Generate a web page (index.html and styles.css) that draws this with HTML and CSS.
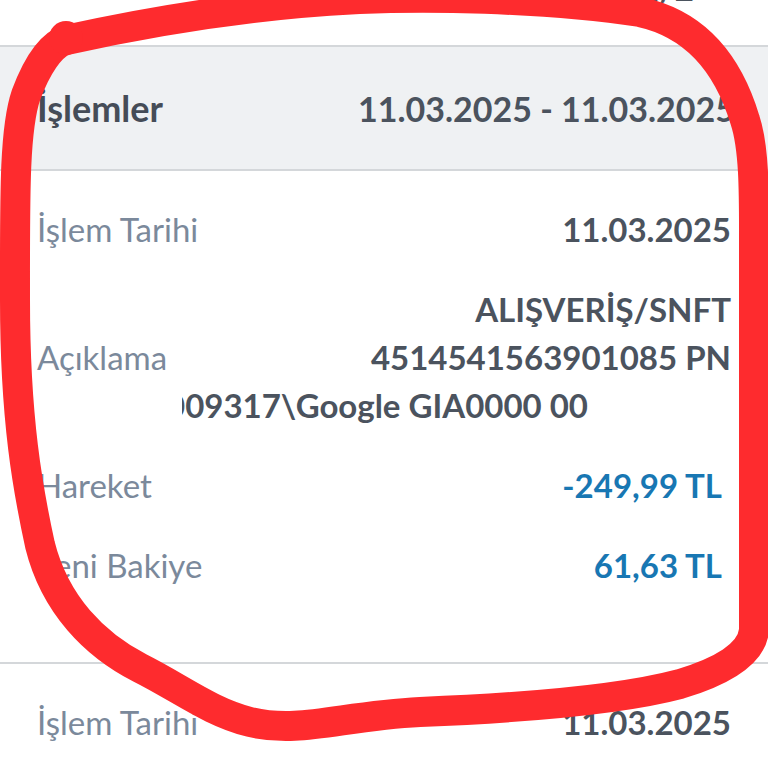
FILE: index.html
```html
<!DOCTYPE html>
<html lang="tr">
<head>
    <meta charset="UTF-8">
    <meta name="viewport" content="width=device-width, initial-scale=1.0">
    <title>İşlemler</title>
    <link rel="stylesheet" href="styles.css">
</head>
<body>
    <div class="topbar">
        <span class="page-count">1/2</span>
    </div>

    <div class="section-head">
        <span class="section-title">İşlemler</span>
        <span class="section-range">11.03.2025 - 11.03.2025</span>
    </div>

    <div class="txn">
        <div class="txn-row">
            <span class="txn-label">İşlem Tarihi</span>
            <span class="txn-value">11.03.2025</span>
        </div>
        <div class="txn-row">
            <span class="txn-label">Açıklama</span>
            <div class="txn-value desc">
                <div>ALIŞVERİŞ/SNFT</div>
                <div>4514541563901085 PN</div>
                <div class="desc-cut"><span>009317\Google GIA0000 00</span></div>
            </div>
        </div>
        <div class="txn-row">
            <span class="txn-label">Hareket</span>
            <span class="txn-value amount">-249,99 TL</span>
        </div>
        <div class="txn-row">
            <span class="txn-label">Yeni Bakiye</span>
            <span class="txn-value amount">61,63 TL</span>
        </div>
    </div>

    <div class="txn">
        <div class="txn-row">
            <span class="txn-label">İşlem Tarihi</span>
            <span class="txn-value">11.03.2025</span>
        </div>
    </div>

    <!-- hand drawn marker over the screenshot -->
    <svg class="scribble" width="768" height="768" viewBox="0 0 768 768">
        <path d="M66 40 C120 28 200 12 300 3 C420 -8 560 0 640 12 C700 25 730 70 745 120 C755 150 754 200 754 250 L754 630 C752 655 720 672 680 684 C620 700 520 708 420 712 C340 716 300 734 250 722 C210 712 180 688 140 668 C95 645 55 605 40 545 C28 490 15 420 15 300 C15 200 14 130 26 95 C36 68 50 45 66 40 Z"
              fill="none" stroke="#fe2b2e" stroke-width="30" stroke-linejoin="round"/>
        <circle cx="66" cy="38" r="17" fill="#fe2b2e"/>
    </svg>
</body>
</html>
```

FILE: styles.css
```css
body {
    margin: 0;
    padding: 0;
    background-color: #fff;
    font-family: 'Lato', 'Liberation Sans', sans-serif;
    color: #4b535e;
    overflow: hidden;
    height: 768px;
}

.topbar {
    height: 45px;
    border-bottom: 2px solid #d4d7da;
    text-align: right;
    padding-right: 74px;
    overflow: hidden;
}

.page-count {
    display: block;
    margin-top: -28px;
    font-size: 33px;
    font-weight: 700;
    line-height: 33px;
    color: #4b535e;
}

.section-head {
    display: flex;
    justify-content: space-between;
    align-items: center;
    height: 122px;
    padding: 0 33px 0 37px;
    background-color: #eff1f3;
    border-bottom: 2px solid #d4d7da;
    font-weight: 700;
}

.section-title {
    font-size: 36px;
    color: #454c57;
}

.section-range {
    font-size: 34px;
    color: #4b535e;
}

.txn {
    display: flex;
    flex-direction: column;
    gap: 32px;
    padding: 34px 37px 73px;
    border-bottom: 2px solid #d4d7da;
}

.txn-row {
    display: flex;
    justify-content: space-between;
    align-items: center;
    font-size: 33px;
    line-height: 48px;
}

.txn-label {
    color: #7b899b;
    white-space: nowrap;
}

.txn-value {
    font-weight: 700;
    text-align: right;
    color: #4b535e;
}

.desc {
    flex: 1;
    min-width: 0;
}

.desc-cut {
    display: flex;
    justify-content: flex-end;
    margin-left: 15px;
    margin-right: 143px;
    overflow: hidden;
    white-space: nowrap;
}

.desc-cut span {
    flex-shrink: 0;
}

.amount {
    color: #1877b3;
    padding-right: 9px;
}

.scribble {
    position: absolute;
    top: 0;
    left: 0;
}
```
